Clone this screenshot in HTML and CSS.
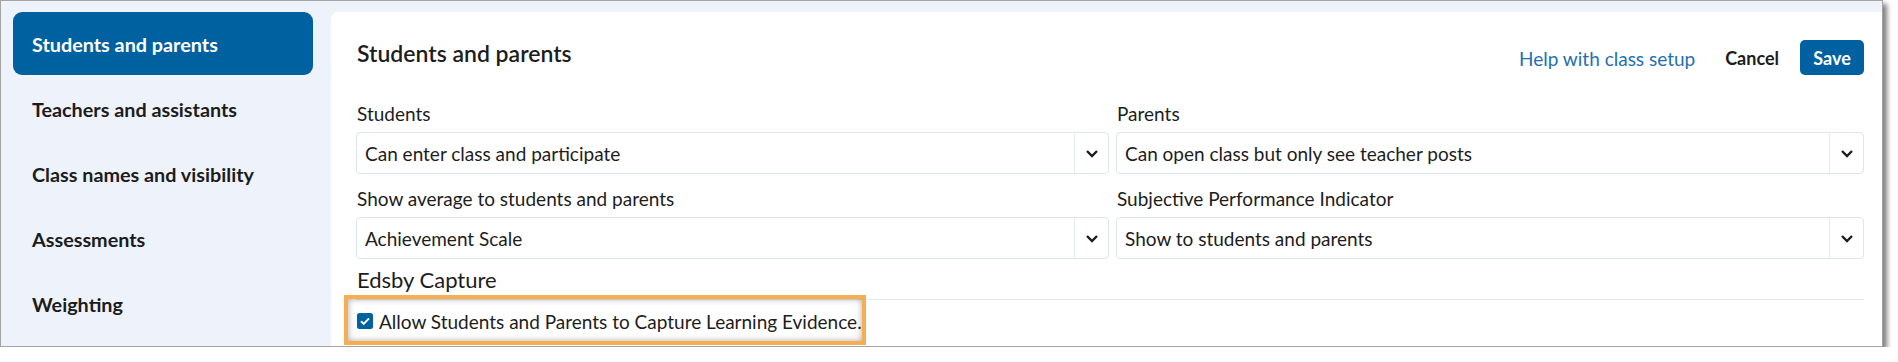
FILE: index.html
```html
<!DOCTYPE html>
<html lang="en">
<head>
<meta charset="utf-8">
<title>Class setup - Students and parents</title>
<link rel="stylesheet" href="styles.css">
</head>
<body>
<div class="frame">
  <nav class="sidebar">
    <div class="nav-item active">Students and parents</div>
    <div class="nav-item">Teachers and assistants</div>
    <div class="nav-item">Class names and visibility</div>
    <div class="nav-item">Assessments</div>
    <div class="nav-item">Weighting</div>
  </nav>
  <main class="panel">
    <header class="panel-header">
      <h1 class="panel-title">Students and parents</h1>
      <div class="actions">
        <a class="help-link">Help with class setup</a>
        <button class="btn-cancel">Cancel</button>
        <button class="btn-save">Save</button>
      </div>
    </header>
    <div class="fields">
      <div class="field">
        <label class="field-label">Students</label>
        <div class="select">
          <span class="select-value">Can enter class and participate</span>
          <span class="select-arrow"><svg width="14" height="9" viewBox="0 0 14 9"><path d="M2 2l5 5 5-5" fill="none" stroke="#1c1c1c" stroke-width="2.4"/></svg></span>
        </div>
      </div>
      <div class="field">
        <label class="field-label">Parents</label>
        <div class="select">
          <span class="select-value">Can open class but only see teacher posts</span>
          <span class="select-arrow"><svg width="14" height="9" viewBox="0 0 14 9"><path d="M2 2l5 5 5-5" fill="none" stroke="#1c1c1c" stroke-width="2.4"/></svg></span>
        </div>
      </div>
      <div class="field">
        <label class="field-label">Show average to students and parents</label>
        <div class="select">
          <span class="select-value">Achievement Scale</span>
          <span class="select-arrow"><svg width="14" height="9" viewBox="0 0 14 9"><path d="M2 2l5 5 5-5" fill="none" stroke="#1c1c1c" stroke-width="2.4"/></svg></span>
        </div>
      </div>
      <div class="field">
        <label class="field-label">Subjective Performance Indicator</label>
        <div class="select">
          <span class="select-value">Show to students and parents</span>
          <span class="select-arrow"><svg width="14" height="9" viewBox="0 0 14 9"><path d="M2 2l5 5 5-5" fill="none" stroke="#1c1c1c" stroke-width="2.4"/></svg></span>
        </div>
      </div>
    </div>
    <h2 class="section-title">Edsby Capture</h2>
    <div class="check-row">
      <svg class="checkbox" width="16" height="16" viewBox="0 0 16 16"><rect x="0" y="0" width="16" height="16" rx="2.5" fill="#0061a1"/><path d="M4 8.3l2.7 2.6L12 5.4" fill="none" stroke="#fff" stroke-width="2"/></svg>
      <span class="check-label">Allow Students and Parents to Capture Learning Evidence.</span>
    </div>
  </main>
  <div class="highlight"></div>
</div>
</body>
</html>
```
FILE: styles.css
```css
html, body {
  margin: 0;
  padding: 0;
  background: #ffffff;
}

body {
  font-family: "Lato", "Open Sans", sans-serif;
  color: #1d1d1d;
}

.frame {
  position: relative;
  box-sizing: border-box;
  width: 1883px;
  height: 347px;
  border: 1px solid #a4a4a4;
  background: #eef2fa;
  padding: 11px 0 0 12px;
  display: flex;
  gap: 18px;
  overflow: hidden;
  box-shadow: 4px 4px 5px rgba(0, 0, 0, 0.5);
}

.sidebar {
  width: 300px;
  flex: none;
  display: flex;
  flex-direction: column;
  gap: 2px;
}

.nav-item {
  height: 63px;
  display: flex;
  align-items: center;
  padding-left: 19px;
  font-size: 19.8px;
  font-weight: 700;
  color: #1c1c1c;
  border-radius: 9px;
}

.nav-item.active {
  background: #0061a1;
  color: #ffffff;
}

.panel {
  flex: 1;
  background: #ffffff;
  border-top-left-radius: 7px;
  padding: 27px 18px 0 25px;
}

.panel-header {
  display: flex;
  justify-content: space-between;
  align-items: flex-start;
}

.panel-title {
  margin: 0;
  padding-left: 1px;
  font-size: 23px;
  line-height: 28px;
  font-weight: 600;
}

.actions {
  display: flex;
  align-items: center;
  margin-top: 1px;
}

.help-link {
  font-size: 19px;
  color: #1f6fb2;
  margin-right: 30px;
  margin-top: 2px;
}

.btn-cancel {
  border: 0;
  background: none;
  padding: 0;
  font-family: inherit;
  font-size: 18px;
  font-weight: 700;
  color: #1c1c1c;
  margin-right: 21px;
}

.btn-save {
  border: 0;
  width: 64px;
  height: 35px;
  border-radius: 5px;
  background: #0061a1;
  color: #ffffff;
  font-family: inherit;
  font-size: 18px;
  font-weight: 700;
  padding: 0;
}

.fields {
  display: grid;
  grid-template-columns: 753px 1fr;
  column-gap: 7px;
  row-gap: 13px;
  margin-top: 27px;
}

.field {
  display: flex;
  flex-direction: column;
  gap: 6px;
}

.field-label {
  padding-left: 1px;
  font-size: 19px;
  line-height: 24px;
}

.select {
  box-sizing: border-box;
  height: 42px;
  border: 1px solid #dde5ef;
  border-radius: 4px;
  display: flex;
  align-items: center;
}

.select-value {
  flex: 1;
  padding-left: 8px;
  font-size: 19px;
}

.select-arrow {
  width: 33px;
  align-self: stretch;
  border-left: 1px solid #e6ecf3;
  display: flex;
  align-items: center;
  justify-content: center;
}

.section-title {
  margin: 7px 0 0 0;
  padding: 0 0 5px 1px;
  font-size: 22px;
  line-height: 28px;
  font-weight: 400;
  border-bottom: 1px solid #e3e9f0;
}

.check-row {
  display: flex;
  align-items: center;
  gap: 6px;
  height: 22px;
  margin-top: 10px;
  padding-left: 1px;
}

.checkbox {
  flex: none;
}

.check-label {
  font-size: 19px;
}

.highlight {
  position: absolute;
  left: 343px;
  top: 294px;
  width: 522px;
  height: 50px;
  box-sizing: border-box;
  border: 4px solid #f7ad52;
  box-shadow: inset 0 0 6px rgba(0, 0, 0, 0.35);
  pointer-events: none;
}
```
